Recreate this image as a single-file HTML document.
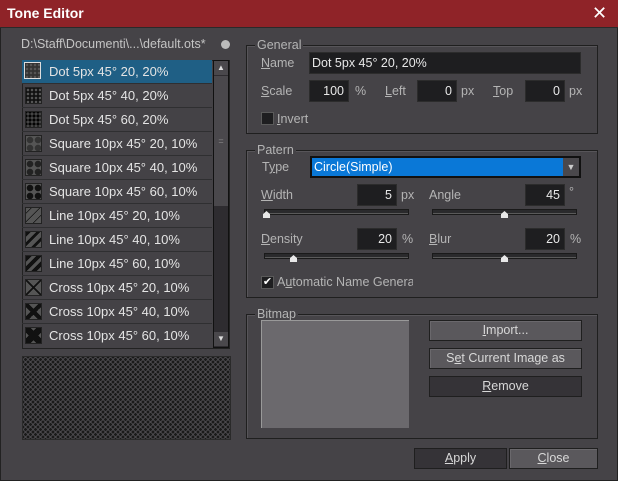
<!DOCTYPE html><html><head><style>
body{margin:0;width:618px;height:481px;background:#454347;font-family:"Liberation Sans",sans-serif;font-size:12.5px;color:#d8d8d8;position:relative;overflow:hidden}
.a{position:absolute}
.tb{left:0;top:0;width:618px;height:27px;background:#8f2328;color:#fff;font-weight:bold;font-size:14px;line-height:27px;border-bottom:1px solid #2a2a2a}
.inp{position:absolute;background:#1e1e20;border:1px solid #2c2c2c;color:#e8e8e8;text-align:right;line-height:20px;padding-right:4px;box-sizing:border-box}
.lbl{position:absolute;color:#b4b4b4}
.grp{position:absolute;border:1px solid #1f1f1f;box-shadow:inset 1px 1px 0 #575559}
.gt{position:absolute;background:#454347;color:#b4b4b4;padding:0 2px;top:-9px;left:8px;line-height:16px}
.row{position:absolute;left:22px;width:190px;height:23px;border-bottom:1px solid #2f2f31;line-height:23px;font-size:13px;color:#e4e4e4}
.row .ic{position:absolute;left:3px;top:3px;width:17px;height:17px;border:1px solid #222;box-sizing:border-box;background-color:#111;background-image:radial-gradient(circle,#555 1.2px,transparent 1.4px);background-size:4px 4px}
.row .sq{background-color:#111;background-image:radial-gradient(circle,transparent 3px,#555 3.5px);background-size:8px 8px}
.row .ln{background-color:#555;background-size:auto}
.row .cr{background-color:#555;background-size:auto;background-image:linear-gradient(45deg,transparent 46%,#111 46% 54%,transparent 54%),linear-gradient(-45deg,transparent 46%,#111 46% 54%,transparent 54%)}
.row span{position:absolute;left:27px}
.trk{position:absolute;height:4px;background:#2a2a2c;border:1px solid #1a1a1a;box-shadow:inset 0 -1px 0 #5a5a5a}
.th{position:absolute;width:7px;height:7px;background:#e8e8e8;clip-path:polygon(50% 0,100% 45%,100% 100%,0 100%,0 45%)}
.btn{position:absolute;border:1px solid #1f1f1f;background:#5a585c;text-align:center;line-height:18px;color:#d8d8d8;box-shadow:inset 1px 1px 0 #6a686c}
.chk{position:absolute;width:11px;height:11px;background:#1e1e20;border:1px solid #5a5a5a}
u{text-decoration:underline}
</style></head><body>
<div class="a tb"><span style="margin-left:7px">Tone Editor</span><span style="position:absolute;left:592px;top:0;font-size:18px;font-weight:normal">✕</span></div>
<div class="a" style="left:0;top:28px;width:1px;height:453px;background:#222"></div>
<div class="a" style="left:617px;top:28px;width:1px;height:453px;background:#222"></div>
<div class="a" style="left:0;top:480px;width:618px;height:1px;background:#222"></div>
<div class="lbl" style="left:21px;top:37px;color:#c4c4c4">D:\Staff\Documenti\...\default.ots*</div>
<div class="a" style="left:221px;top:40px;width:9px;height:9px;border-radius:50%;background:#bbb"></div>
<div class="a" style="left:22px;top:60px;width:208px;height:289px;background:#444246;border:1px solid #222;box-sizing:border-box"></div>
<div class="row" style="top:60px;background:#1f5f85"><div class="ic" style="border:1px solid #ddd;top:2px;left:2px;background-color:#333"></div><span>Dot 5px 45° 20, 20%</span></div>
<div class="row" style="top:84px"><div class="ic"></div><span>Dot 5px 45° 40, 20%</span></div>
<div class="row" style="top:108px"><div class="ic" style="background-color:#000;background-image:radial-gradient(circle,#444 1.6px,transparent 1.8px)"></div><span>Dot 5px 45° 60, 20%</span></div>
<div class="row" style="top:132px"><div class="ic sq" style="background-color:#333"></div><span>Square 10px 45° 20, 10%</span></div>
<div class="row" style="top:156px"><div class="ic sq" style="background-color:#222"></div><span>Square 10px 45° 40, 10%</span></div>
<div class="row" style="top:180px"><div class="ic sq"></div><span>Square 10px 45° 60, 10%</span></div>
<div class="row" style="top:204px"><div class="ic ln" style="background-image:repeating-linear-gradient(-45deg,#555 0 5px,#111 5px 6px)"></div><span>Line 10px 45° 20, 10%</span></div>
<div class="row" style="top:228px"><div class="ic ln" style="background-image:repeating-linear-gradient(-45deg,#555 0 4px,#111 4px 7px)"></div><span>Line 10px 45° 40, 10%</span></div>
<div class="row" style="top:252px"><div class="ic ln" style="background-image:repeating-linear-gradient(-45deg,#555 0 3px,#111 3px 7px)"></div><span>Line 10px 45° 60, 10%</span></div>
<div class="row" style="top:276px"><div class="ic cr"></div><span>Cross 10px 45° 20, 10%</span></div>
<div class="row" style="top:300px"><div class="ic cr" style="background-image:linear-gradient(45deg,transparent 40%,#111 40% 60%,transparent 60%),linear-gradient(-45deg,transparent 40%,#111 40% 60%,transparent 60%)"></div><span>Cross 10px 45° 40, 10%</span></div>
<div class="row" style="top:324px;border:none"><div class="ic cr" style="background-image:linear-gradient(45deg,transparent 34%,#111 34% 66%,transparent 66%),linear-gradient(-45deg,transparent 34%,#111 34% 66%,transparent 66%)"></div><span>Cross 10px 45° 60, 10%</span></div>
<div class="a" style="left:213px;top:60px;width:16px;height:288px;background:#2e2c30;border:1px solid #111;box-sizing:border-box"></div>
<div class="a" style="left:214px;top:61px;width:14px;height:14px;background:#4a484c;color:#ddd;font-size:8px;text-align:center;line-height:14px">▲</div>
<div class="a" style="left:214px;top:76px;width:14px;height:130px;background:#4a484c;color:#888;font-size:9px;text-align:center;line-height:130px">=</div>
<div class="a" style="left:214px;top:332px;width:14px;height:14px;background:#4a484c;color:#ddd;font-size:8px;text-align:center;line-height:14px">▼</div>
<div class="a" style="left:22px;top:356px;width:209px;height:84px;border:1px solid #2a2a2a;box-sizing:border-box;background-color:#4a484c;background-image:radial-gradient(circle,#1a1a1a 1.3px,transparent 1.5px),radial-gradient(circle,#1a1a1a 1.3px,transparent 1.5px);background-size:5px 5px;background-position:0 0,2.5px 2.5px"></div>

<div class="grp" style="left:246px;top:45px;width:350px;height:87px"><div class="gt">General</div></div>
<div class="lbl" style="left:261px;top:56px"><u>N</u>ame</div>
<div class="inp" style="left:309px;top:52px;width:272px;height:22px;text-align:left;padding-left:2px">Dot 5px 45° 20, 20%</div>
<div class="lbl" style="left:261px;top:84px"><u>S</u>cale</div>
<div class="inp" style="left:309px;top:80px;width:40px;height:22px">100</div><div class="lbl" style="left:355px;top:84px">%</div>
<div class="lbl" style="left:385px;top:84px"><u>L</u>eft</div>
<div class="inp" style="left:417px;top:80px;width:40px;height:22px">0</div><div class="lbl" style="left:461px;top:84px">px</div>
<div class="lbl" style="left:493px;top:84px"><u>T</u>op</div>
<div class="inp" style="left:525px;top:80px;width:40px;height:22px">0</div><div class="lbl" style="left:569px;top:84px">px</div>
<div class="chk" style="left:261px;top:112px"></div><div class="lbl" style="left:277px;top:112px"><u>I</u>nvert</div>

<div class="grp" style="left:246px;top:150px;width:350px;height:146px"><div class="gt">Patern</div></div>
<div class="lbl" style="left:262px;top:160px">T<u>y</u>pe</div>
<div class="a" style="left:310px;top:156px;width:271px;height:22px;background:#111;border:1px solid #111;box-sizing:border-box"></div>
<div class="a" style="left:312px;top:158px;width:249px;height:18px;background:#0a78d7;color:#fff;line-height:18px;padding-left:2px">Circle(Simple)</div>
<div class="a" style="left:563px;top:158px;width:16px;height:18px;background:#4a484c;color:#ccc;font-size:9px;text-align:center;line-height:18px">▼</div>
<div class="lbl" style="left:261px;top:188px"><u>W</u>idth</div>
<div class="inp" style="left:357px;top:184px;width:40px;height:22px">5</div><div class="lbl" style="left:401px;top:188px">px</div>
<div class="lbl" style="left:429px;top:188px">An<u>g</u>le</div>
<div class="inp" style="left:525px;top:184px;width:40px;height:22px">45</div><div class="lbl" style="left:569px;top:185px">°</div>
<div class="trk" style="left:264px;top:209px;width:143px"></div><div class="th" style="left:263px;top:211px"></div>
<div class="trk" style="left:432px;top:209px;width:143px"></div><div class="th" style="left:501px;top:211px"></div>
<div class="lbl" style="left:261px;top:232px"><u>D</u>ensity</div>
<div class="inp" style="left:357px;top:228px;width:40px;height:22px">20</div><div class="lbl" style="left:402px;top:232px">%</div>
<div class="lbl" style="left:429px;top:232px"><u>B</u>lur</div>
<div class="inp" style="left:525px;top:228px;width:40px;height:22px">20</div><div class="lbl" style="left:570px;top:232px">%</div>
<div class="trk" style="left:264px;top:253px;width:143px"></div><div class="th" style="left:290px;top:255px"></div>
<div class="trk" style="left:432px;top:253px;width:143px"></div><div class="th" style="left:501px;top:255px"></div>
<div class="chk" style="left:261px;top:276px;color:#fff;font-size:11px;line-height:11px;text-align:center">✔</div>
<div class="lbl" style="left:277px;top:275px;width:136px;overflow:hidden;white-space:nowrap">A<u>u</u>tomatic Name Generation</div>

<div class="grp" style="left:246px;top:314px;width:350px;height:123px"><div class="gt">Bitmap</div></div>
<div class="a" style="left:261px;top:320px;width:148px;height:108px;background:#6b696d;border-top:1px solid #999;border-left:1px solid #999;box-sizing:border-box"></div>
<div class="btn" style="left:429px;top:320px;width:151px;height:19px"><u>I</u>mport...</div>
<div class="btn" style="left:429px;top:348px;width:151px;height:19px">S<u>e</u>t Current Image as</div>
<div class="btn" style="left:429px;top:376px;width:151px;height:19px;background:#353337;box-shadow:none"><u>R</u>emove</div>
<div class="btn" style="left:414px;top:448px;width:91px;height:19px;background:#353337;box-shadow:none"><u>A</u>pply</div>
<div class="btn" style="left:509px;top:448px;width:87px;height:19px"><u>C</u>lose</div>
</body></html>
